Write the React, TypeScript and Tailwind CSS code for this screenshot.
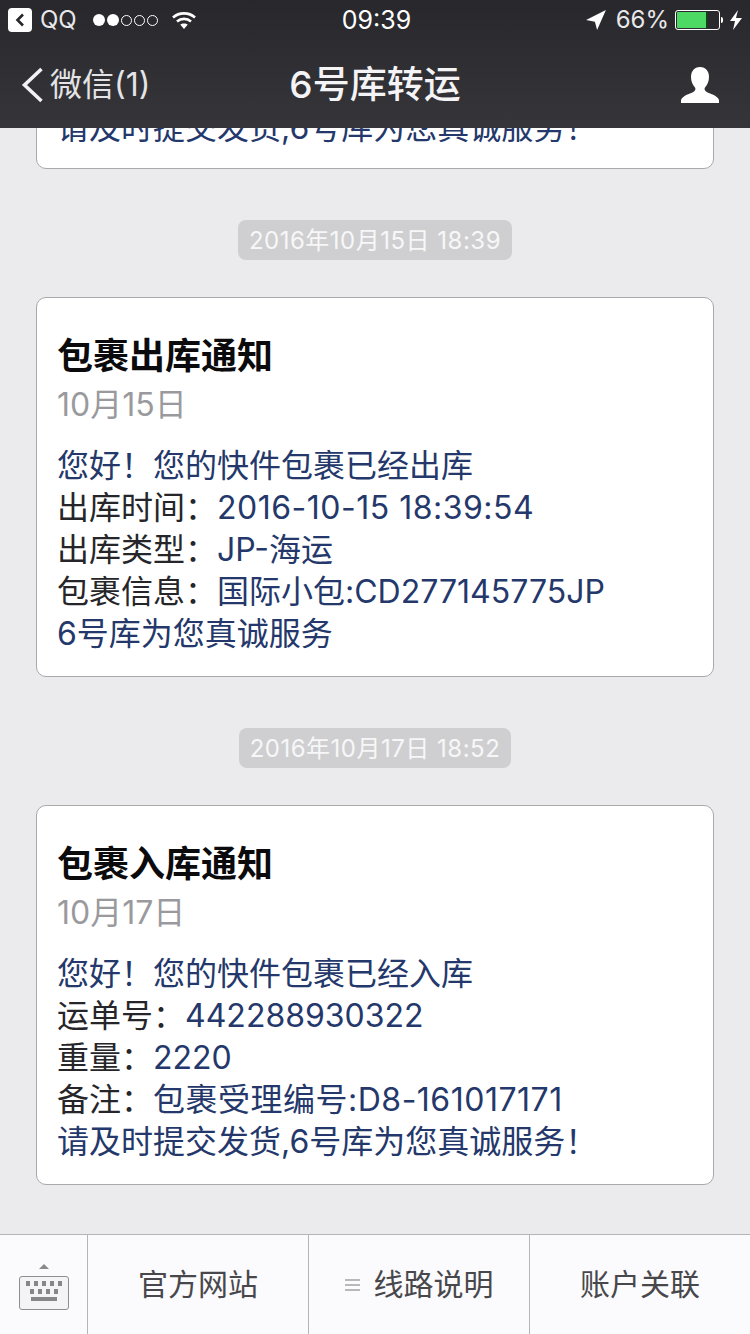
const SANS = "font-['Inter','Noto_Sans_CJK_SC',sans-serif]";

const Wifi = () => (
  <svg width="26" height="20" viewBox="0 0 26 20" fill="none" stroke="#fff" strokeWidth="2.6">
    <path d="M2 7.500C8 2 18 2 24 7.500" />
    <path d="M6 11.500C10 8 16 8 20 11.500" />
    <path d="M9.200 14.500C11 13 15 13 16.800 14.500L13 19Z" fill="#fff" stroke="none" />
  </svg>
);

const Person = () => (
  <svg width="38" height="36" viewBox="0 0 38 36" fill="#fff">
    <path d="M19 0c6 0 9 4.500 9 10 0 4-1.500 8-4 10.500-.8 1-.5 3 1 4 4 2.500 11 3.500 13 8.500v3H0v-3c2-5 9-6 13-8.500 1.500-1 1.800-3 1-4C11.500 18 10 14 10 10c0-5.500 3-10 9-10z" />
  </svg>
);

const Keyboard = () => (
  <div className="flex flex-col items-center">
    <div className="w-0 h-0 border-x-[5px] border-x-transparent border-b-[5px] border-b-[#8a8a8c] mb-[7px]" />
    <div className="w-[50px] h-[34px] rounded-[3px] border border-[#8e8e90] bg-[#f4f4f6] flex flex-col items-center pt-[4px] gap-[3px]">
      <div className="flex gap-[4px]">
        {[0, 1, 2, 3, 4].map((i) => <div key={i} className="w-[4px] h-[5px] bg-[#87878a]" />)}
      </div>
      <div className="flex gap-[4px]">
        {[0, 1, 2, 3].map((i) => <div key={i} className="w-[4px] h-[5px] bg-[#87878a]" />)}
      </div>
      <div className="w-[26px] h-[4px] bg-[#87878a]" />
    </div>
  </div>
);

const Line = ({ label, value, wide }: { label?: string; value: string; wide?: boolean }) => (
  <div className="h-[42px] leading-[42px] whitespace-nowrap">
    {label && <span className="text-[#26262a]">{label}</span>}
    <span className={wide ? "text-[#24386b] tracking-[0.5px]" : "text-[#24386b]"}>{value}</span>
  </div>
);

const Stamp = ({ text }: { text: string }) => (
  <div className="flex justify-center">
    <div className="h-[40px] leading-[42px] px-[11px] rounded-[8px] bg-[#cfcfd1] text-[#f7f7f8] text-[24px] tracking-[0.5px]">{text}</div>
  </div>
);

const Notice = ({ title, date, children }: { title: string; date: string; children: React.ReactNode }) => (
  <div className="mx-[36px] h-[380px] bg-white rounded-[10px] border border-[#a9a9ab] pl-[20px] pt-[35px] text-[32px]">
    <div className="text-[36px] leading-[46px] font-bold text-[#0b0b0d]">{title}</div>
    <div className="text-[#9a9a9e] leading-[46px] mt-[3px] mb-[17px]">{date}</div>
    {children}
  </div>
);

const Tab = ({ text, menu }: { text: string; menu?: boolean }) => (
  <div className="flex-1 flex items-center justify-center gap-[14px] border-l border-[#b5b5b7] text-[30px] text-[#48484c]">
    {menu && (
      <div className="flex flex-col gap-[3px]">
        <div className="w-[15px] h-[2px] bg-[#b8b8ba]" />
        <div className="w-[15px] h-[2px] bg-[#b8b8ba]" />
        <div className="w-[15px] h-[2px] bg-[#b8b8ba]" />
      </div>
    )}
    {text}
  </div>
);

export default function App() {
  return (
    <div className={`${SANS} w-[750px] h-[1334px] flex flex-col overflow-hidden bg-[#ebebed]`}>
      <header className="relative z-10 h-[128px] shrink-0 bg-gradient-to-b from-[#28282c] to-[#35353a] text-white">
        <div className="h-[40px] relative flex items-center pl-[8px] text-[24px]">
          <div className="w-[24px] h-[24px] rounded-[4px] bg-white flex items-center justify-center">
            <svg width="10" height="14" viewBox="0 0 10 14" fill="none" stroke="#28282c" strokeWidth="2.6"><path d="M8 1.500 2.500 7 8 12.500" /></svg>
          </div>
          <span className="ml-[8px] text-[#e8e8ea] leading-none">QQ</span>
          <div className="flex items-center gap-[2px] ml-[16px]">
            <div className="w-[12px] h-[12px] rounded-full bg-white" />
            <div className="w-[12px] h-[12px] rounded-full bg-white" />
            <div className="w-[11px] h-[11px] rounded-full border border-white" />
            <div className="w-[11px] h-[11px] rounded-full border border-white" />
            <div className="w-[11px] h-[11px] rounded-full border border-white" />
          </div>
          <div className="ml-[13px]"><Wifi /></div>
          <span className="absolute left-[3px] right-0 text-center text-[25px] leading-[42px]">09:39</span>
          <div className="absolute right-[8px] flex items-center">
            <svg width="22" height="22" viewBox="0 0 20 20" fill="#fff"><path d="M19 1 1 10l8 1.500L11 19z" /></svg>
            <span className="ml-[9px] text-[#e8e8ea]">66%</span>
            <div className="ml-[6px] w-[45px] h-[20px] rounded-[3px] border border-white p-[1px] flex">
              <div className="w-[29px] h-full bg-[#4cd964] rounded-l-[1px]" />
              <div className="w-[2px] h-full bg-[#14401f]" />
            </div>
            <div className="w-[2px] h-[6px] bg-white ml-[1px] rounded-r-[2px]" />
            <svg className="ml-[7px]" width="12" height="20" viewBox="0 0 12 20" fill="#fff"><path d="M8 0 0 11h5l-2 9 9-12H6z" /></svg>
          </div>
        </div>
        <div className="h-[88px] relative flex items-center justify-center pt-[2px]">
          <div className="absolute left-[21px] flex items-center text-[32px] text-[#e4e4e6]">
            <svg width="23" height="36" viewBox="0 0 23 36" fill="none" stroke="#f2f2f4" strokeWidth="3.600"><path d="M20.500 2 3.500 18l17 16" /></svg>
            <span className="ml-[6px]">微信(1)</span>
          </div>
          <span className="text-[37px] font-medium text-[#f4f4f6]">6号库转运</span>
          <div className="absolute right-[31px]"><Person /></div>
        </div>
      </header>

      <main className="flex-1 min-h-0 overflow-hidden">
        <div className="mx-[36px] -mt-[100px] h-[141px] bg-white rounded-[10px] border border-[#a9a9ab] pl-[20px] pt-[78px] text-[32px]">
          <Line value="请及时提交发货,6号库为您真诚服务！" />
        </div>
        <div className="h-[51px]" />
        <Stamp text="2016年10月15日 18:39" />
        <div className="h-[37px]" />
        <Notice title="包裹出库通知" date="10月15日">
          <Line value="您好！您的快件包裹已经出库" />
          <Line label="出库时间：" value="2016-10-15 18:39:54" wide />
          <Line label="出库类型：" value="JP-海运" />
          <Line label="包裹信息：" value="国际小包:CD277145775JP" />
          <Line value="6号库为您真诚服务" />
        </Notice>
        <div className="h-[51px]" />
        <Stamp text="2016年10月17日 18:52" />
        <div className="h-[37px]" />
        <Notice title="包裹入库通知" date="10月17日">
          <Line value="您好！您的快件包裹已经入库" />
          <Line label="运单号：" value="442288930322" />
          <Line label="重量：" value="2220" />
          <Line label="备注：" value="包裹受理编号:D8-161017171" wide />
          <Line value="请及时提交发货,6号库为您真诚服务！" />
        </Notice>
      </main>

      <footer className="h-[100px] shrink-0 flex bg-[#fbfafc] border-t border-[#b5b5b7]">
        <div className="w-[87px] shrink-0 flex items-center justify-center pt-[4px]"><Keyboard /></div>
        <Tab text="官方网站" />
        <Tab text="线路说明" menu />
        <Tab text="账户关联" />
      </footer>
    </div>
  );
}
